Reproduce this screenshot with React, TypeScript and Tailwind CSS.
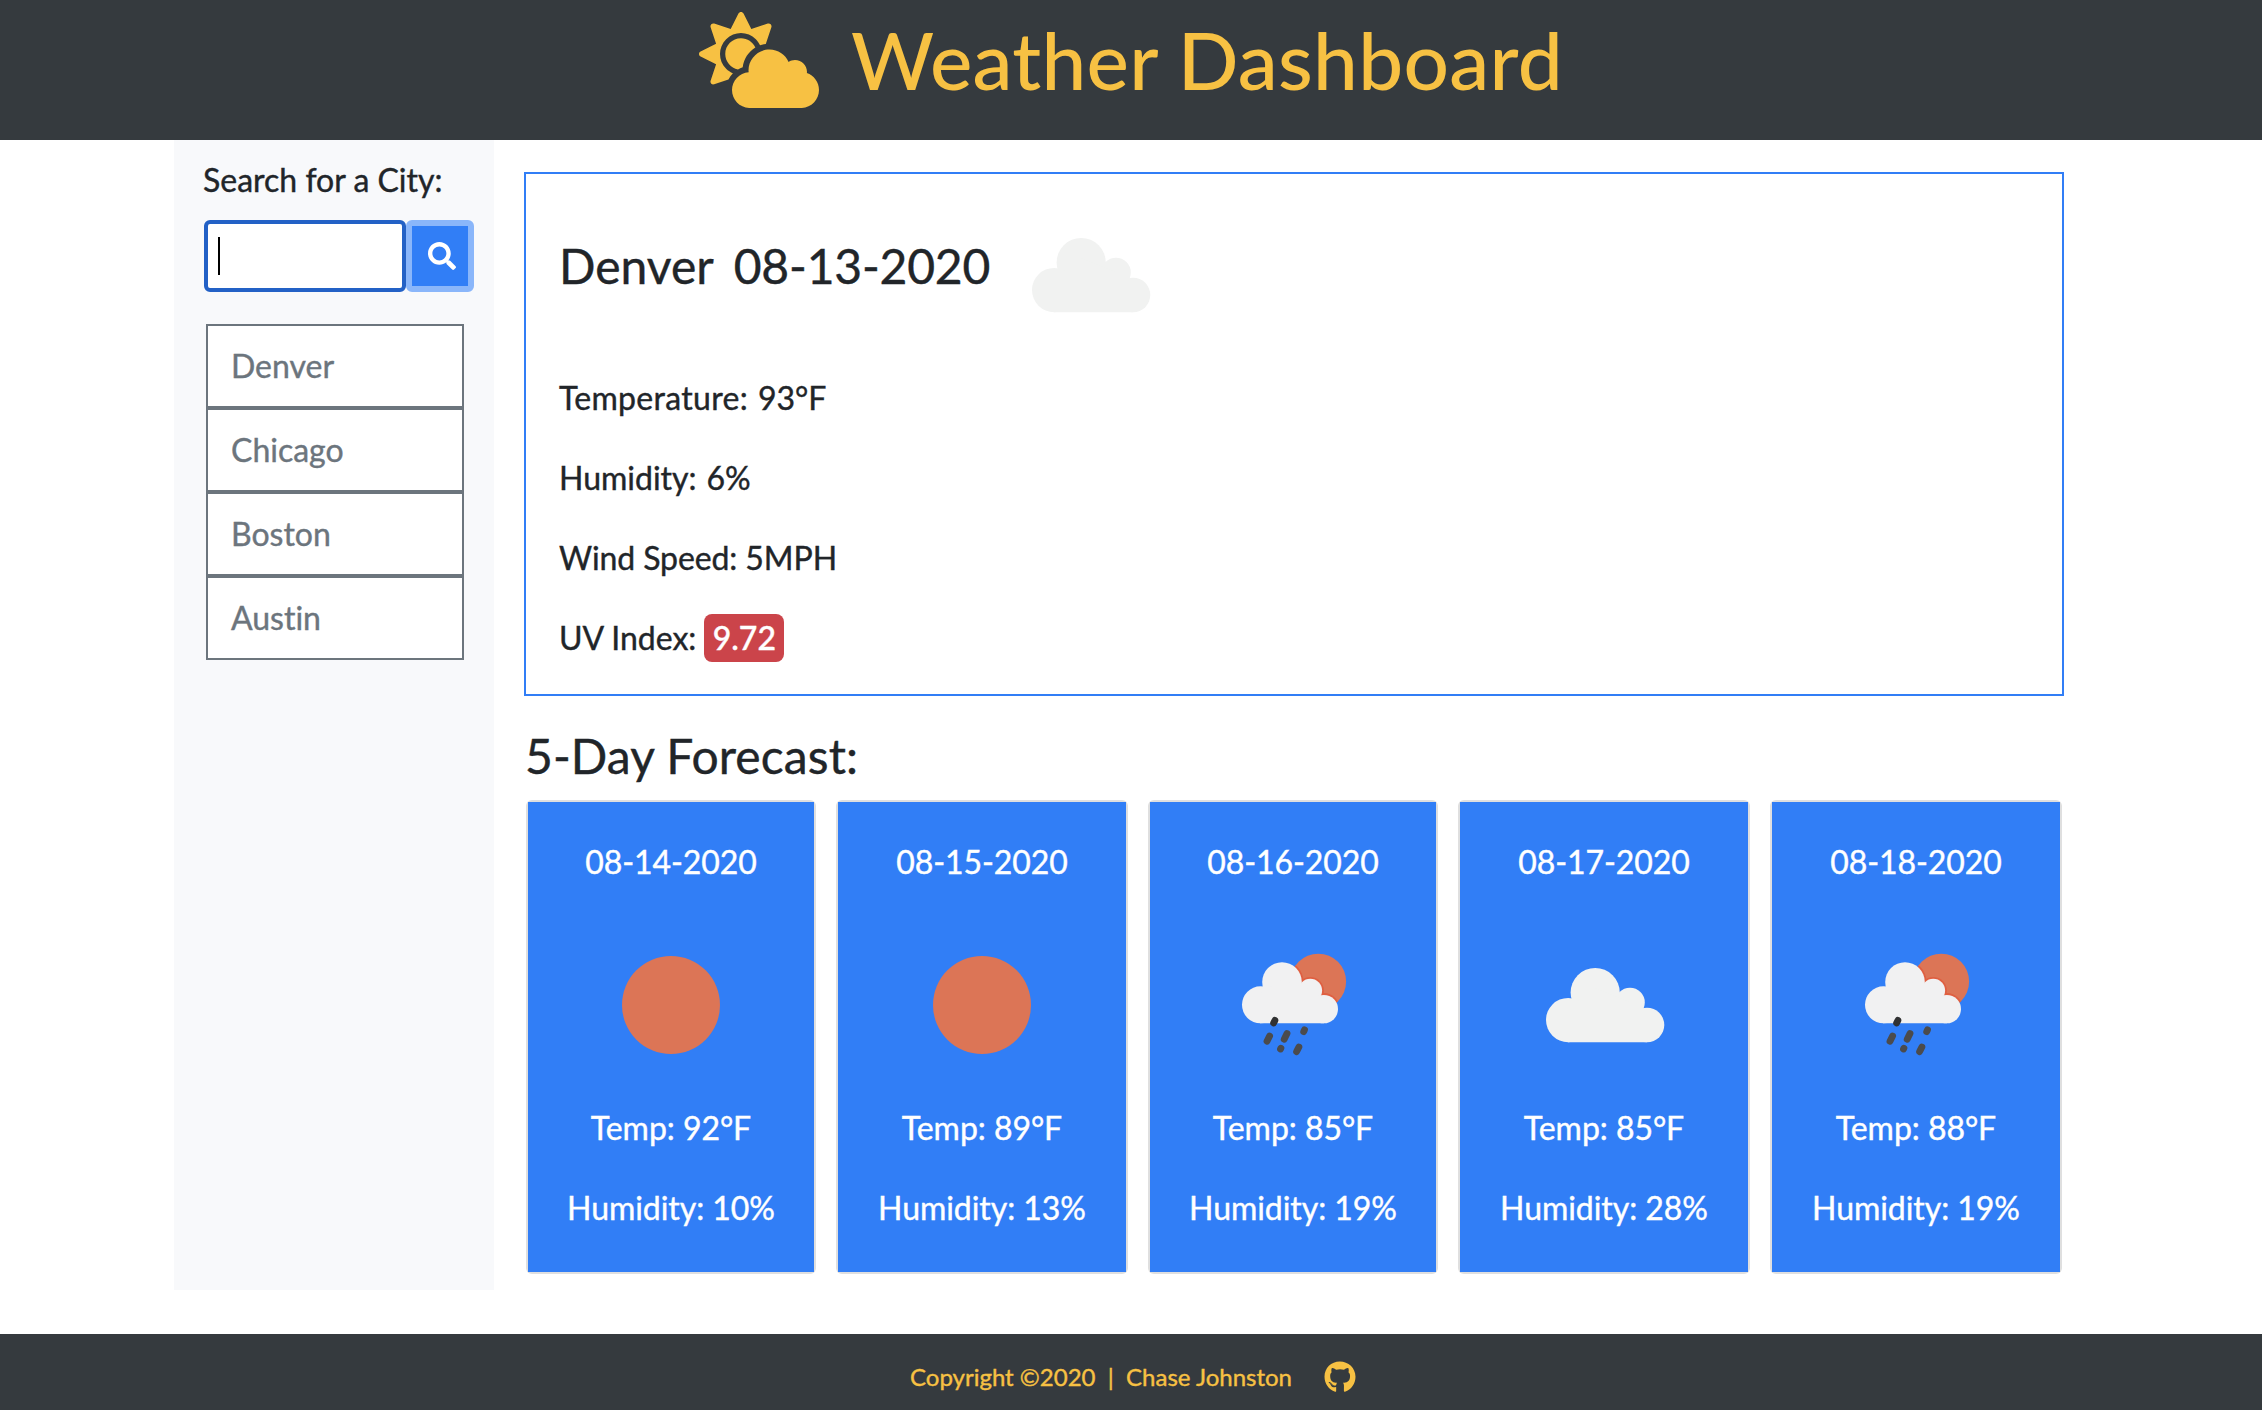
import React from "react";
import { FaCloudSun, FaGithub, FaSearch } from "react-icons/fa";

type Sky = "sun" | "rain" | "cloud";

function WeatherIcon({ kind, className = "" }: { kind: Sky; className?: string }) {
  return (
    <svg viewBox="0 0 200 200" className={`size-[200px] shrink-0 ${className}`}>
      {kind === "sun" && <circle cx="100" cy="100" r="49" fill="#dc7556" />}
      {kind === "cloud" && (
        <g fill="#f1f2f1" transform="translate(42 63)">
          <circle cx="49.2" cy="24.6" r="24.6" />
          <circle cx="22.2" cy="52.1" r="22.2" />
          <circle cx="84" cy="34.5" r="14.8" />
          <circle cx="101" cy="57" r="17.3" />
          <path d="M22 74.3V40L49 20L84 34L101 50V74.3Z" />
        </g>
      )}
      {kind === "rain" && (
        <g>
          <clipPath id="sun-disc">
            <circle cx="125.3" cy="76.5" r="27.8" />
          </clipPath>
          <circle cx="125.3" cy="76.5" r="27.8" fill="#dc7556" />
          <g clipPath="url(#sun-disc)" fill="#df5f41">
            <circle cx="89" cy="77.1" r="21.6" />
            <circle cx="117.3" cy="85.5" r="13.6" />
            <circle cx="130.8" cy="104.1" r="16" />
          </g>
          <g fill="#f1f1f2">
            <circle cx="89" cy="77.1" r="19.8" />
            <circle cx="67.5" cy="99.8" r="18.5" />
            <circle cx="117.3" cy="85.5" r="11.8" />
            <circle cx="130.8" cy="104.1" r="14.2" />
            <path d="M67 118.3V88L89 75L117 84L131 98V118.3Z" />
          </g>
          <g stroke="#4b4b4c" strokeWidth="6.8" strokeLinecap="round">
            <path d="M81.9 115.4L80.6 118" stroke="#303132" />
            <path d="M76.6 131L74 136.2" />
            <path d="M94 128.6L91.2 134.2" />
            <path d="M111.5 124.8L110.7 126.6" />
            <path d="M87.9 143.3L87.5 144" />
            <path d="M105.9 142L103.6 146.6" />
          </g>
        </g>
      )}
    </svg>
  );
}

const cities = ["Denver", "Chicago", "Boston", "Austin"];

const forecast: { date: string; sky: Sky; temp: number; humidity: number }[] = [
  { date: "08-14-2020", sky: "sun", temp: 92, humidity: 10 },
  { date: "08-15-2020", sky: "sun", temp: 89, humidity: 13 },
  { date: "08-16-2020", sky: "rain", temp: 85, humidity: 19 },
  { date: "08-17-2020", sky: "cloud", temp: 85, humidity: 28 },
  { date: "08-18-2020", sky: "rain", temp: 88, humidity: 19 },
];

function Sidebar() {
  return (
    <aside className="h-[1150px] w-80 shrink-0 bg-[#f8f9fb] pt-4 pl-[30px]">
      <label className="-ml-px block leading-[48px]">Search for a City:</label>
      <div className="mt-4 flex h-[72px]">
        <div className="flex w-[202px] items-center rounded-md border-4 border-[#2361c6] bg-white pl-2.5">
          <span className="h-[38px] w-0.5 bg-black" />
        </div>
        <button className="flex w-[68px] items-center justify-center rounded-md border-[6px] border-[#8ab6fa] text-white">
          <span className="flex size-full items-center justify-center bg-[#317ef6] pl-[3px]">
            <FaSearch className="size-7" />
          </span>
        </button>
      </div>
      <ul className="mt-8 ml-0.5 w-[258px] text-[#6c757d]">
        {cities.map((city) => (
          <li key={city} className="h-[84px] border-2 border-[#6c757d] bg-white px-[23px] leading-[80px]">
            {city}
          </li>
        ))}
      </ul>
    </aside>
  );
}

function Reading({ label, labelClass = "mr-2", children }: { label: string; labelClass?: string; children: React.ReactNode }) {
  return (
    <p className="mb-8 flex h-12 items-center leading-[48px]">
      <span className={labelClass}>{label}</span>
      {children}
    </p>
  );
}

export default function App() {
  return (
    <div className="flex h-[1410px] w-[2262px] flex-col overflow-hidden bg-white font-['Lato',sans-serif] text-[32px] text-[#212529] [font-variant-ligatures:no-common-ligatures] [-webkit-text-stroke:0.4px]">
      <header className="flex h-[140px] shrink-0 justify-center bg-[#353a3e] text-[#f7c143]">
        <FaCloudSun className="mt-3 mr-8 h-24 w-[120px]" />
        <h1 className="text-[80px] leading-[118px] font-medium tracking-[0.3px] [-webkit-text-stroke:0px]">
          Weather Dashboard
        </h1>
      </header>

      <div className="flex flex-1 pl-[174px]">
        <Sidebar />
        <main className="ml-[30px] w-[1540px] pt-8">
          <section className="h-[524px] border-2 border-[#317ef6] px-[33px]">
            <div className="flex h-[200px] items-start">
              <h2 className="mt-[63px] w-[431px] text-[48px] leading-[58px] whitespace-pre">
                Denver<span className="ml-5 tracking-[-0.2px]">08-13-2020</span>
              </h2>
              <WeatherIcon kind="cloud" className="mt-px" />
            </div>
            <Reading label="Temperature:" labelClass="mr-2.5 tracking-[0.3px]">93°F</Reading>
            <Reading label="Humidity:" labelClass="mr-2.5">6%</Reading>
            <Reading label="Wind Speed:" labelClass="mr-2 tracking-[-0.1px]">5MPH</Reading>
            <Reading label="UV Index:">
              <span className="flex h-12 w-20 items-center justify-center rounded-lg bg-[#cb444a] font-medium text-white">
                9.72
              </span>
            </Reading>
          </section>

          <h2 className="mt-[31px] pl-px text-[48px] leading-[58px] tracking-[0.1px]">5-Day Forecast:</h2>
          <div className="mt-[15px] grid grid-cols-[310px_312px_310px_312px_292px] px-0.5">
            {forecast.map((day) => (
              <article key={day.date} className="h-[474px] w-[290px] rounded-md bg-[#dfdfdf] p-0.5 even:w-[292px] last:w-[292px]">
                <div className="flex h-full flex-col items-center bg-[#317ef6] pt-9 leading-[48px] text-white">
                  <p className="tracking-[-0.1px]">{day.date}</p>
                  <WeatherIcon kind={day.sky} className="mt-[19px]" />
                  <p className="-mt-px tracking-[-0.05px]">Temp: {day.temp}°F</p>
                  <p className="mt-8 tracking-[-0.05px]">Humidity: {day.humidity}%</p>
                </div>
              </article>
            ))}
          </div>
        </main>
      </div>

      <footer className="flex h-[76px] shrink-0 items-center justify-center bg-[#353a3e] pt-2.5 pl-1 text-2xl text-[#f7c143]">
        <span className="whitespace-pre">Copyright ©2020  |  Chase Johnston</span>
        <FaGithub className="ml-8 size-8" />
      </footer>
    </div>
  );
}
